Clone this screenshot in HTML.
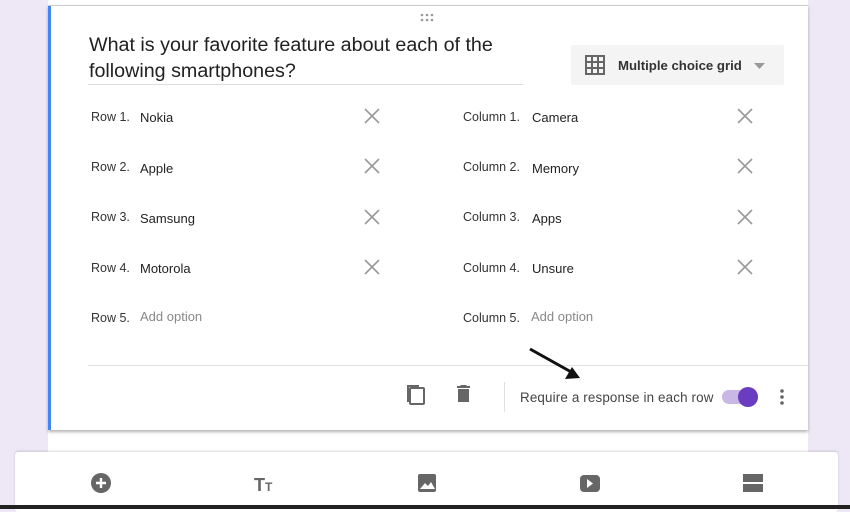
<!DOCTYPE html>
<html><head><style>
body{margin:0;width:850px;height:509px;position:relative;overflow:hidden;background:#ede7f6;font-family:"Liberation Sans",sans-serif;}
.abs{position:absolute}
.page{left:48px;top:0;width:760px;height:452px;background:#fff}
.card{left:48px;top:5px;width:760px;height:425px;background:#fff;box-shadow:0 2px 3px rgba(0,0,0,.3);border-top:1px solid #ccc;box-sizing:border-box}
.blue{left:48px;top:6px;width:3px;height:424px;background:#4285f4}
.q{left:89px;top:32px;font-size:19.7px;line-height:26px;color:#212121}
.qline{left:88px;top:84px;width:435px;height:1px;background:#ddd}
.dd{left:571px;top:45px;width:213px;height:40px;background:#f4f4f4;border-radius:2px}
.lbl{font-size:12.5px;color:#333}
.val{font-size:13px;color:#222}
.add{font-size:13px;color:#888}
.tool{left:15px;top:452px;width:823px;height:60px;background:#fff;border-radius:3px;box-shadow:0 -1px 2px rgba(0,0,0,.15)}
.bb{left:0;top:505px;width:850px;height:4px;background:#222}
</style></head><body>
<div class="abs page"></div>
<div class="abs card"></div>
<div class="abs blue"></div>
<svg class="abs" style="left:419px;top:13px" width="18" height="10"><g fill="#999"><circle cx="3" cy="2" r="1.3"/><circle cx="8" cy="2" r="1.3"/><circle cx="13" cy="2" r="1.3"/><circle cx="3" cy="7" r="1.3"/><circle cx="8" cy="7" r="1.3"/><circle cx="13" cy="7" r="1.3"/></g></svg>
<div class="abs q">What is your favorite feature about each of the<br>following smartphones?</div>
<div class="abs qline"></div>
<div class="abs dd">
<svg class="abs" style="left:14px;top:10px" width="20" height="20" viewBox="0 0 20 20"><rect x="1" y="1" width="18" height="18" fill="none" stroke="#666" stroke-width="2"/><path d="M7 1V19M13 1V19M1 7H19M1 13H19" stroke="#666" stroke-width="2"/></svg>
<div class="abs" style="left:47px;top:13px;font-size:13.2px;font-weight:bold;color:#333">Multiple choice grid</div>
<svg class="abs" style="left:183px;top:18px" width="11" height="6"><path d="M0 0H11L5.5 6Z" fill="#999"/></svg>
</div>

<div class="abs lbl" style="left:91px;top:110px">Row 1.</div><div class="abs val" style="left:140px;top:110px">Nokia</div>
<div class="abs lbl" style="left:91px;top:160px">Row 2.</div><div class="abs val" style="left:140px;top:161px">Apple</div>
<div class="abs lbl" style="left:91px;top:210px">Row 3.</div><div class="abs val" style="left:140px;top:211px">Samsung</div>
<div class="abs lbl" style="left:91px;top:261px">Row 4.</div><div class="abs val" style="left:140px;top:261px">Motorola</div>
<div class="abs lbl" style="left:91px;top:311px">Row 5.</div><div class="abs add" style="left:140px;top:309px">Add option</div>

<div class="abs lbl" style="left:463px;top:110px">Column 1.</div><div class="abs val" style="left:532px;top:110px">Camera</div>
<div class="abs lbl" style="left:463px;top:160px">Column 2.</div><div class="abs val" style="left:532px;top:161px">Memory</div>
<div class="abs lbl" style="left:463px;top:210px">Column 3.</div><div class="abs val" style="left:532px;top:211px">Apps</div>
<div class="abs lbl" style="left:463px;top:261px">Column 4.</div><div class="abs val" style="left:532px;top:261px">Unsure</div>
<div class="abs lbl" style="left:463px;top:311px">Column 5.</div><div class="abs add" style="left:531px;top:309px">Add option</div>

<svg class="abs" style="left:0;top:0" width="850" height="509">
<g stroke="#999" stroke-width="1.6">
<path d="M365 109l14 14M379 109l-14 14"/><path d="M365 159l14 14M379 159l-14 14"/><path d="M365 210l14 14M379 210l-14 14"/><path d="M365 260l14 14M379 260l-14 14"/>
<path d="M738 109l14 14M752 109l-14 14"/><path d="M738 159l14 14M752 159l-14 14"/><path d="M738 210l14 14M752 210l-14 14"/><path d="M738 260l14 14M752 260l-14 14"/>
</g>
<line x1="88" y1="365.5" x2="808" y2="365.5" stroke="#e0e0e0"/>
<line x1="504.5" y1="382" x2="504.5" y2="412" stroke="#e0e0e0"/>
<path d="M530 349L573 373" stroke="#111" stroke-width="3"/><path d="M580 378L565 379L572 367Z" fill="#111"/>
<path d="M407 387v15h2v-15z" fill="#666"/><rect x="410" y="388" width="14" height="16" rx="1" fill="none" stroke="#666" stroke-width="2"/><path d="M407 387h12v-2h-12z" fill="#666"/>
<path d="M457 388h13v-2h-3l-1-1h-5l-1 1h-3z M458 389h11v13h-11z" fill="#666"/>
<rect x="722" y="390" width="36" height="14" rx="7" fill="#c9b8e6"/>
<circle cx="748" cy="397" r="10" fill="#6a3cc0"/>
<circle cx="782" cy="391" r="1.8" fill="#666"/><circle cx="782" cy="397" r="1.8" fill="#666"/><circle cx="782" cy="403" r="1.8" fill="#666"/>
</svg>
<div class="abs" style="left:520px;top:390px;font-size:13.4px;color:#444;letter-spacing:0.15px">Require a response in each row</div>

<div class="abs tool"></div>
<svg class="abs" style="left:0;top:0" width="850" height="509">
<circle cx="101" cy="483" r="10" fill="#666"/><path d="M96 483h10M101 478v10" stroke="#fff" stroke-width="2.4"/>
<text x="254" y="491" font-family="Liberation Sans" font-weight="bold" font-size="18" fill="#666">T</text><text x="265" y="491" font-family="Liberation Sans" font-weight="bold" font-size="12" fill="#666">T</text>
<rect x="418" y="474" width="18" height="18" rx="2" fill="#666"/><path d="M420 489l5-6 3 3 3-4 4 7z" fill="#fff"/>
<rect x="580" y="475" width="20" height="17" rx="4" fill="#666"/><path d="M587 479v9l6-4.5z" fill="#fff"/>
<rect x="743" y="474" width="20" height="8" fill="#666"/><rect x="743" y="484" width="20" height="8" fill="#666"/>
</svg>
<div class="abs bb"></div>
</body></html>
